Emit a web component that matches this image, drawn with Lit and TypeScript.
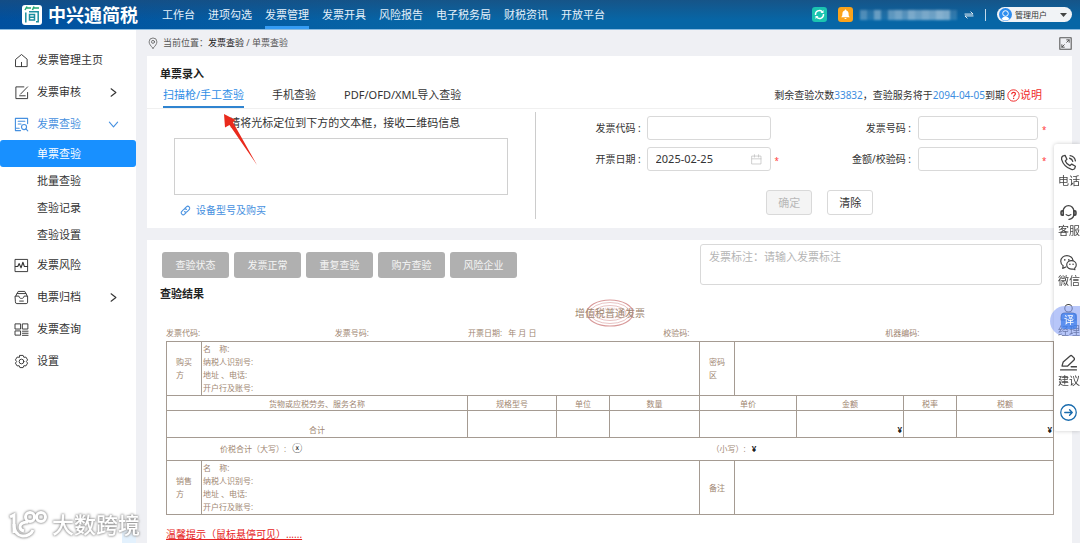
import { LitElement, html, css, svg, TemplateResult } from "lit";
import { customElement, state } from "lit/decorators.js";
import { classMap } from "lit/directives/class-map.js";

const icon = (size: number, body: TemplateResult, box = 16) =>
  html`<svg width=${size} height=${size} viewBox="0 0 ${box} ${box}" fill="none" stroke="currentColor"
    stroke-width="1" stroke-linecap="round" stroke-linejoin="round" aria-hidden="true">${body}</svg>`;

const icons: Record<string, TemplateResult> = {
  home: svg`<path d="M2 6.600 8 1.600l6 5V14.500H2zM8 10v4.500"/>`,
  audit: svg`<path d="M10.500 2H2v12.500h12.500V8M14.500 2 7 9.700M6 11.500h6"/>`,
  check: svg`<path stroke-width="1.200" d="M14.500 7V1.500H1.500v13H7M4.500 4.500h7M4.500 7.500h3M1.500 12h4"/><circle stroke-width="1.200" cx="10.700" cy="10.700" r="2.700"/><path stroke-width="1.200" d="m12.700 12.700 2 2"/>`,
  risk: svg`<path d="M1.500 1.500h13v13h-13z"/><path stroke-width="1.200" d="M1.500 9h2.500l1.500-3 2 4.500 2-6 1.500 4.500h3.500"/>`,
  archive: svg`<path d="M3.500 3.500 4.500 1.500h7l1 2M2 6.500 3 3.800h10l1 2.700M1.500 6.500h3.700c.5 2 1.300 2.500 2.800 2.500s2.300-.5 2.800-2.500h3.700v6.500q0 1.500-1.500 1.500H3q-1.500 0-1.500-1.500zM6 11.800h4"/>`,
  query: svg`<path d="M1.500 2h5.500v5.500H1.500zM9.300 2h5.500v5.500H9.300zM1.500 9.500h5.500v4.500H1.500zM9 9.800h6M9 12h6M9 14.200h6"/>`,
  settings: svg`<path d="M6.300 1.500h3.400l.8 2 2.200-.2 1.800 3-1.300 1.700 1.300 1.700-1.800 3-2.200-.2-.8 2H6.300l-.8-2-2.200.2-1.800-3L2.800 8 1.500 6.300l1.800-3 2.200.2z"/><circle cx="8" cy="8" r="2.500"/>`,
  pin: svg`<path d="M8 15C5 11.800 2.800 9.300 2.800 6.500a5.200 5.200 0 0 1 10.400 0C13.200 9.300 11 11.800 8 15z"/><circle cx="8" cy="6.500" r="2"/>`,
  calendar: svg`<path d="M1.500 3h13v11.500h-13zM1.500 7h13M5 1v3.500M11 1v3.500"/>`,
  link: svg`<path stroke-width="1.500" d="m7 5 2.300-2.300a2.700 2.700 0 0 1 4 4L10.500 9.500a2.700 2.700 0 0 1-4 0M9 11l-2.300 2.300a2.700 2.700 0 0 1-4-4L5.500 6.500a2.700 2.700 0 0 1 4 0"/>`,
  expand: svg`<path stroke-width="1.300" d="M1 1h14v14H1z"/><path stroke-width="1.200" d="M9.500 6.500l3-3M9.500 3.500h3v3M6.500 9.500l-3 3M6.500 12.500h-3v-3"/>`,
  swap: svg`<path stroke-width="1.400" d="M1.500 6.500h13L11 3M14.500 9.500h-13l3.500 3.500"/>`,
  right: svg`<path stroke-width="1.600" d="m4.500 2.500 7 5.500-7 5.500"/>`,
  down: svg`<path stroke-width="1.600" d="M2 4.500 8 11.500l6-7"/>`,
  phone: svg`<path stroke-width="1.200" d="M2.500 2 4.800 1.300 6.500 5 5 6.500q1.200 3 4.300 4.500l1.700-1.500 3.500 2-.7 2.300q-1 1.200-3 .7Q3.500 12 1.500 5q-.3-2 1-3zM9 4q2.500.5 3 3M9.500 1.500q4.500.8 5 5"/>`,
  service: svg`<path stroke-width="1.300" d="M3 6.500a5 5 0 0 1 10 0v4q-.7 3.500-4.500 4"/><path stroke-width="1.500" d="M3 6.500H2q-1 0-1 1v2q0 1 1 1h1zM13 6.500h1q1 0 1 1v2q0 1-1 1h-1z"/><path stroke-width="1.200" d="M5.800 10q2.200 1.800 4.400 0"/>`,
  wechat: svg`<path stroke-width="1.100" d="M5.500 12.200 2.500 13.500 3 11Q.7 9.500.7 6.800C.7 3.500 3.500 1.500 6.500 1.500S12 3.500 12.200 6"/><path stroke-width="1.100" d="M10.800 6.300c2.500 0 4.500 1.700 4.500 4 0 1.300-.6 2.300-1.500 3l.2 1.500-1.700-.7c-3.300.5-6-1.200-6-3.800 0-2.300 2-4 4.500-4z"/><path stroke-width="1.500" d="M4.500 5.500v.1M8.300 5.500v.1M9.300 9.600v.1M12.300 9.600v.1"/>`,
  manager: svg`<circle cx="8" cy="4" r="3.500"/><path d="M1 15v-2.500q0-4 4-4h6q4 0 4 4V15z"/>`,
  suggest: svg`<path stroke-width="1.200" d="M2 11 3 7.500 9.500 1.800q1-.8 2 .2l1.700 1.700q.8 1 0 2L7 11.500H2zM10.500 12h5M.5 15h15"/>`,
  go: svg`<circle stroke-width="1.200" cx="8" cy="8" r="7.300"/><path stroke-width="1.300" d="M4.500 8h7M9 5.500 11.500 8 9 10.500"/>`,
};

const MENU = [
  { icon: "home", label: "发票管理主页" },
  { icon: "audit", label: "发票审核", arrow: "right" },
  { icon: "check", label: "发票查验", arrow: "down", open: true, children: ["单票查验", "批量查验", "查验记录", "查验设置"] },
  { icon: "risk", label: "发票风险" },
  { icon: "archive", label: "电票归档", arrow: "right" },
  { icon: "query", label: "发票查询" },
  { icon: "settings", label: "设置" },
];
const NAV = ["工作台", "进项勾选", "发票管理", "发票开具", "风险报告", "电子税务局", "财税资讯", "开放平台"];
const TABS = ["扫描枪/手工查验", "手机查验", "PDF/OFD/XML导入查验"];
const STATUSES = ["查验状态", "发票正常", "重复查验", "购方查验", "风险企业"];

const base = css`
  * { box-sizing: border-box; }
  button, input, textarea { font: inherit; color: inherit; margin: 0; }
  button { border: 0; background: none; padding: 0; cursor: pointer; }
  a { color: inherit; text-decoration: none; }
  svg { display: block; flex: none; }
`;

@customElement("app-topbar")
export class AppTopbar extends LitElement {
  static styles = [base, css`
    :host { display: block; }
    .bar { display: flex; align-items: stretch; height: 30px; padding: 0 8px 0 22px; color: #fff;
      background: linear-gradient(180deg, rgba(30, 75, 120, .65), rgba(0, 95, 165, 0) 70%), linear-gradient(90deg, #00509f, #0766a6 40%);
      border-bottom: 1px solid #8bbbe0; }
    .logo { display: flex; align-items: center; gap: 6px; width: 140px; font-size: 18px; font-weight: 700; line-height: 28px; white-space: nowrap; }
    .nav { display: flex; gap: 13px; flex: 1; }
    .nav a { border-bottom: 3px solid transparent; line-height: 30px; height: 29px; white-space: nowrap; color: #e4f0fa; }
    .nav a.on { border-color: #359cf4; }
    .tools, .badges, .account { display: flex; align-items: center; }
    .tools { gap: 7px; }
    .badges, .account { gap: 11px; }
    .company { display: flex; width: 97px; height: 10px; filter: blur(1px); }
    .company i { flex: 1; }
    .sep { width: 1px; height: 12px; background: #c2d9ea; }
    .user { display: flex; align-items: center; gap: 3px; width: 75px; height: 15px; padding: 0 5px 0 2px; border-radius: 8px; background: #f1f3f6; color: #333; font-size: 8px; white-space: nowrap; }
    .user span { flex: 1; text-align: left; }
  `];
  render() {
    const tones = [.28, .12, .38, .08, .34, .42, .3, .46, .38, .45, .4, .5, .46, .15];
    return html`<header class="bar">
      <div class="logo">
        <svg width="20" height="20" viewBox="0 0 20 20"><rect width="20" height="20" rx="3" fill="#fff"/>
          <g fill="none" stroke="#1c8fa0" stroke-width="1.500"><path d="M5 1.500 3 5M4.500 3H9M12 1.500 10.500 5M11.500 3H17" stroke="#23a873"/><path d="M3.800 7.500v10M7 6.800h9.200v10H14M7.500 9.500h5v5.500h-5zM7.500 12.200h5"/></g></svg>
        <span>中兴通简税</span>
      </div>
      <nav class="nav">${NAV.map((n) => html`<a href="#" class=${classMap({ on: n === "发票管理" })}>${n}</a>`)}</nav>
      <div class="tools">
        <div class="badges">
          <button aria-label="刷新"><svg width="15" height="15" viewBox="0 0 15 15"><rect width="15" height="15" rx="3" fill="#1bc4b0"/><path d="M3.500 8a4 4 0 0 1 6.800-3.300M11.500 7a4 4 0 0 1-6.800 3.300" fill="none" stroke="#fff" stroke-width="1.400"/><path d="M11.500 3v3H8.500zM3.500 12V9h3z" fill="#fff"/></svg></button>
          <button aria-label="通知"><svg width="15" height="15" viewBox="0 0 15 15"><rect width="15" height="15" rx="3" fill="#fba31b"/><path d="M7.500 2.500c.6 0 .8.400.8.900 1.700.500 2.300 1.800 2.300 3.300 0 2 .4 2.500 1.200 3.500H3.200C4 9.200 4.400 8.700 4.400 6.700c0-1.500.6-2.800 2.300-3.300 0-.5.2-.9.800-.9zM6.200 11h2.600q-1.300 1.800-2.600 0z" fill="#fff"/></svg></button>
        </div>
        <div class="company">${tones.map((t) => html`<i style="background:rgba(255,255,255,${t})"></i>`)}</div>
        <div class="account">
          ${icon(10, icons.swap)}
          <span class="sep"></span>
          <button class="user">
            <svg width="13" height="13" viewBox="0 0 13 13"><circle cx="6.500" cy="6.500" r="6.500" fill="#2e8def"/><circle cx="6.500" cy="5.500" r="2.800" fill="none" stroke="#fff"/><path d="M2.500 11q1-2.500 4-2.500t4 2.500q-4 3-8 0z" fill="#fff"/></svg>
            <span>管理用户</span>
            <svg width="7" height="4" viewBox="0 0 7 4"><path d="M0 0h7L3.500 4z" fill="#444"/></svg>
          </button>
        </div>
      </div>
    </header>`;
  }
}

@customElement("app-menu")
export class AppMenu extends LitElement {
  static styles = [base, css`
    :host { display: block; background: #fff; }
    ul { list-style: none; margin: 0; padding: 0; }
    .menu { padding-top: 14px; }
    .item { display: flex; align-items: center; gap: 8px; height: 32px; padding: 0 17px 0 14px; color: #333; }
    .item span { flex: 1; }
    .item.open { color: #4690e0; }
    .subs { padding-bottom: 1px; }
    .sub { display: block; height: 27px; line-height: 28px; padding-left: 37px; border-radius: 3px; color: #333; }
    .sub.on { background: #1890ff; color: #fff; }
  `];
  render() {
    return html`<ul class="menu">${MENU.map((m) => html`<li>
      <a href="#" class=${classMap({ item: true, open: !!m.open })}>${icon(15, icons[m.icon])}<span>${m.label}</span>${m.arrow ? icon(11, icons[m.arrow]) : ""}</a>
      ${m.children ? html`<ul class="subs">${m.children.map((c, i) => html`<li><a href="#" class=${classMap({ sub: true, on: i === 0 })}>${c}</a></li>`)}</ul>` : ""}
    </li>`)}</ul>`;
  }
}

@customElement("invoice-entry")
export class InvoiceEntry extends LitElement {
  @state() private tab = 0;
  static styles = [base, css`
    :host { display: block; background: #fff; padding-top: 8px; }
    h2 { margin: 0 0 0 13px; font-size: 11px; line-height: 20px; color: #222; }
    .head { display: flex; justify-content: space-between; height: 25px; padding: 0 30px 0 16px; border-bottom: 1px solid #f0f0f0; }
    .tabs { display: flex; gap: 28px; }
    .tabs button { height: 24px; line-height: 20px; border-bottom: 2px solid transparent; white-space: nowrap; }
    .tabs button.on { color: #2f8ee6; border-color: #2f84d0; }
    .quota { display: flex; align-items: center; font-size: 10px; height: 22px; white-space: nowrap; }
    .quota b { font-weight: 400; color: #3d8de0; }
    .quota a { display: flex; align-items: center; margin-left: 2px; color: #f02c2c; font-size: 11px; }
    .body { display: flex; height: 119px; padding-top: 3px; }
    .scan { width: 42%; border-right: 1px solid #ccc; height: 107px; padding: 0 27px; }
    .scan label { display: block; text-align: center; line-height: 22px; height: 26px; padding-left: 8px; }
    .scan textarea { display: block; width: 100%; height: 57px; border: 1px solid #d0d0d0; background: #fff; resize: none; outline: 0; }
    .scan a { display: inline-flex; align-items: center; gap: 5px; margin: 6px 0 0 6px; font-size: 10px; line-height: 18px; color: #4690e0; }
    form { flex: 1; padding: 4px 25px 0 60px; }
    .row { display: flex; justify-content: space-between; margin-bottom: 7px; }
    .field { display: flex; align-items: center; gap: 4px; font-size: 10px; }
    .field label { width: 47px; white-space: nowrap; }
    .field.wide label { width: 62px; text-align: right; padding-right: 3px; }
    .box { display: flex; align-items: center; width: 124px; height: 24px; border: 1px solid #d9d9d9; border-radius: 3px; padding: 0 8px; color: #bbb; }
    .wide .box { width: 120px; }
    .box input { flex: 1; min-width: 0; border: 0; outline: 0; padding: 0; background: none; font-size: 11px; color: #333; }
    .star { width: 5px; color: #f33; font-size: 8px; line-height: 8px; padding-top: 3px; }
    .actions { display: flex; justify-content: center; gap: 15px; padding: 12px 3px 0 0; }
    .actions button { width: 46px; height: 25px; border: 1px solid #d9d9d9; border-radius: 3px; }
    .actions button:disabled { background: #f4f4f4; color: #b8b8b8; }
    .arrow { position: absolute; left: 223px; top: 113px; pointer-events: none; }
  `];
  private field(id: string, label: string, wide: boolean, star: boolean, value = "") {
    return html`<div class=${classMap({ field: true, wide })}><label for=${id}>${label} :</label>
      <div class="box"><input id=${id} type="text" .value=${value}>${value ? icon(11, icons.calendar) : ""}</div>
      <span class="star">${star ? "*" : ""}</span></div>`;
  }
  render() {
    return html`<h2>单票录入</h2>
      <div class="head">
        <div class="tabs" role="tablist">${TABS.map((t, i) => html`<button role="tab" class=${classMap({ on: i === this.tab })} @click=${() => (this.tab = i)}>${t}</button>`)}</div>
        <div class="quota">剩余查验次数<b>33832</b>，查验服务将于<b>2094-04-05</b>到期<a href="#">
          <svg width="13" height="13" viewBox="0 0 13 13" fill="none" stroke="currentColor"><circle cx="6.500" cy="6.500" r="5.700"/><path stroke-width="1.200" d="M4.700 5.200q0-1.900 1.900-1.900t1.800 1.700c0 1.200-1.800 1.200-1.800 2.700M6.600 8.800V10"/></svg>说明</a></div>
      </div>
      <div class="body">
        <div class="scan"><label for="scan">请将光标定位到下方的文本框，接收二维码信息</label><textarea id="scan"></textarea>
          <a href="#">${icon(11, icons.link)}设备型号及购买</a></div>
        <form @submit=${(e: Event) => e.preventDefault()}>
          <div class="row">${this.field("code", "发票代码", false, false)}${this.field("number", "发票号码", true, true)}</div>
          <div class="row">${this.field("date", "开票日期", false, true, "2025-02-25")}${this.field("amount", "金额/校验码", true, true)}</div>
          <div class="actions"><button disabled>确定</button><button type="reset">清除</button></div>
        </form>
      </div>
      <svg class="arrow" width="35" height="53" viewBox="0 0 35 53" aria-hidden="true"><path d="M1 1 12.500 7 9.800 9 34 52 6.500 12 2 14.500z" fill="#e92a1c"/></svg>`;
  }
}

@customElement("invoice-result")
export class InvoiceResult extends LitElement {
  static styles = [base, css`
    :host { display: block; background: #fff; padding: 4px 18px 0 19px; }
    .top { display: flex; justify-content: space-between; height: 41px; padding-right: 12px; margin-left: -4px; }
    .states { display: flex; gap: 5px; padding-top: 8px; }
    .states button { width: 67px; height: 26px; border-radius: 3px; background: #b0b0b0; color: #f5f5f5; font-size: 10px; }
    .note { width: 342px; height: 41px; padding: 4px 8px; border: 1px solid #d9d9d9; border-radius: 3px; resize: none; outline: 0; line-height: 16px; font-size: 11px; }
    .note::placeholder { color: #b5b5b5; }
    h2 { margin: 0 0 0 -6px; font-size: 11px; line-height: 18px; color: #222; }
    .paper { color: #a08672; font-size: 8px; line-height: 13px; }
    .title { display: grid; place-items: center; height: 25px; font-size: 10px; margin-top: -3px; }
    .title > * { grid-area: 1 / 1; }
    .title svg { overflow: visible; }
    .info { display: grid; grid-template-columns: 19% 15% 22% 25% 1fr; line-height: 16px; }
    table { width: 100%; table-layout: fixed; border-collapse: collapse; }
    td, th { border: 1px solid #a59b92; padding: 0; font-weight: 400; }
    th { height: 15px; text-align: center; line-height: 13px; }
    .party { height: 54px; padding: 0 0 1px 1px; line-height: 13px; vertical-align: top; white-space: pre; }
    .side { padding: 0 8px 1px 9px; }
    .sum td { height: 27px; vertical-align: bottom; padding: 0 1px 1px; text-align: right; color: #222; font-weight: 700; }
    .sum .label { text-align: center; color: #a08672; font-weight: 400; }
    .total td { height: 23px; padding-bottom: 2px; }
    .total .up { padding-left: 53px; border-right: 0; }
    .total .low { padding-left: 12px; border-left: 0; }
    .total b { color: #222; margin-left: 4px; }
    .total .up b { font-weight: 400; font-size: 10px; }
    .tip { display: inline-block; margin-top: 11px; font-size: 10px; line-height: 16px; color: #e62525; text-decoration: underline; }
    .c1, .c6 { width: 35px; } .c3 { width: 89px; } .c4, .c9 { width: 53px; } .c5 { width: 90px; } .c7 { width: 62px; } .c8 { width: 107px; } .c10 { width: 97px; }
  `];
  private party(side: string, right: string) {
    return html`<tr><td class="side">${side}</td><td class="party" colspan="4">${"名    称:\n纳税人识别号:\n地址 、电话:\n开户行及账号:"}</td><td class="side">${right}</td><td colspan="4"></td></tr>`;
  }
  render() {
    return html`<div class="top"><div class="states">${STATUSES.map((s) => html`<button>${s}</button>`)}</div>
        <textarea class="note" aria-label="发票标注" placeholder="发票标注：请输入发票标注"></textarea></div>
      <h2>查验结果</h2>
      <div class="paper">
        <div class="title"><svg width="48" height="26" viewBox="0 0 48 26" fill="none" stroke="#d99a9a"><ellipse cx="24" cy="13" rx="23" ry="13" stroke-width="1.200"/><ellipse cx="24" cy="13" rx="20" ry="10.500" stroke-width=".6"/><ellipse cx="24" cy="13" rx="16" ry="7.500" stroke-width=".6"/><ellipse cx="24" cy="13" rx="12" ry="4.500" stroke-width="2" stroke-dasharray="1 1" opacity=".5"/></svg><span>增值税普通发票</span></div>
        <div class="info"><span>发票代码:</span><span>发票号码:</span><span>开票日期:&nbsp;&nbsp; 年 月 日</span><span>校验码:</span><span>机器编码:</span></div>
        <table>
          <colgroup>${[1, 2, 3, 4, 5, 6, 7, 8, 9, 10].map((n) => html`<col class="c${n}">`)}</colgroup>
          <tbody>
            ${this.party("购买方", "密码区")}
            <tr><th colspan="2">货物或应税劳务、服务名称</th><th>规格型号</th><th>单位</th><th>数量</th><th colspan="2">单价</th><th>金额</th><th>税率</th><th>税额</th></tr>
            <tr class="sum"><td class="label" colspan="2">合计</td><td></td><td></td><td></td><td colspan="2"></td><td>¥</td><td></td><td>¥</td></tr>
            <tr class="total"><td class="up" colspan="5">价税合计（大写）: <b>ⓧ</b></td><td class="low" colspan="5">（小写）: <b>¥</b></td></tr>
            ${this.party("销售方", "备注")}
          </tbody>
        </table>
        <a class="tip" href="#">温馨提示（鼠标悬停可见）......</a>
      </div>`;
  }
}

@customElement("app-root")
export class AppRoot extends LitElement {
  static styles = [base, css`
    :host { display: block; position: relative; min-height: 100vh; background: #eff0f4; color: #333; font: 11px/16px "Noto Sans", "Noto Sans CJK SC", sans-serif; }
    .page { display: flex; min-height: 100vh; flex-direction: column; }
    .main { display: flex; flex: 1; }
    app-menu { width: 136px; flex: none; }
    .content { flex: 1; min-width: 0; display: flex; flex-direction: column; padding: 0 8px 0 11px; }
    .crumb { display: flex; align-items: center; height: 26px; font-size: 9px; color: #555; }
    .crumb span { flex: 1; padding-left: 4px; }
    .crumb b { font-weight: 400; color: #222; }
    invoice-result { flex: 1; margin-top: 12px; }
    .dock { position: fixed; right: 0; top: 144px; width: 26px; height: 287px; padding: 10px 0 0 4px; background: #fff; border-radius: 3px 0 0 3px; box-shadow: 0 0 4px rgba(0, 0, 0, .2); overflow: hidden; color: #444; }
    .dock a { display: block; height: 50px; white-space: nowrap; line-height: 18px; }
    .dock svg { margin: 0 0 1px 2px; }
    .dock .go { color: #1a6cae; }
    .translate { position: fixed; right: 0; top: 306px; width: 30px; height: 30px; border-radius: 15px 0 0 15px; background: rgba(135, 160, 245, .6); display: grid; place-items: center; padding-left: 8px; }
    .translate span { width: 16px; height: 16px; border-radius: 3px; background: rgba(62, 125, 235, .75); color: #fff; font-size: 10px; line-height: 14px; text-align: center; }
    .mark { position: absolute; left: 8px; bottom: 4px; display: flex; align-items: center; gap: 4px; color: #fff; font-size: 22px; line-height: 30px; font-weight: 500; filter: drop-shadow(0 0 1px #888) drop-shadow(0 0 1px #bbb); pointer-events: none; white-space: nowrap; }
    .fold { position: absolute; left: 122px; bottom: 0; width: 14px; height: 13px; background: #e3f1fd; }
  `];
  render() {
    const dock = [["phone", "电话"], ["service", "客服"], ["wechat", "微信"], ["manager", "经理"], ["suggest", "建议"]];
    return html`<div class="page"><app-topbar></app-topbar>
      <div class="main"><app-menu></app-menu>
        <main class="content">
          <div class="crumb">${icon(12, icons.pin)}<span>当前位置：<b>发票查验</b>&nbsp;/ 单票查验</span><button aria-label="全屏">${icon(13, icons.expand)}</button></div>
          <invoice-entry></invoice-entry>
          <invoice-result></invoice-result>
        </main>
      </div></div>
      <aside class="dock">${dock.map(([i, t]) => html`<a href="#">${icon(17, icons[i])}${t}</a>`)}<a class="go" href="#" aria-label="收起">${icon(17, icons.go)}</a></aside>
      <button class="translate" aria-label="翻译"><span>译</span></button>
      <div class="fold"></div>
      <div class="mark"><svg width="40" height="28" viewBox="0 0 40 28" fill="none" stroke="#fff" stroke-width="3"><path d="M2 7l4-2v18"/><path d="M6 14c0 16 16 14 19 6M20 12q-8 0-8 5 0 3 4 4"/><circle cx="22" cy="7" r="4.500"/><circle cx="33" cy="7" r="4.500"/></svg><span>大数跨境</span></div>`;
  }
}
